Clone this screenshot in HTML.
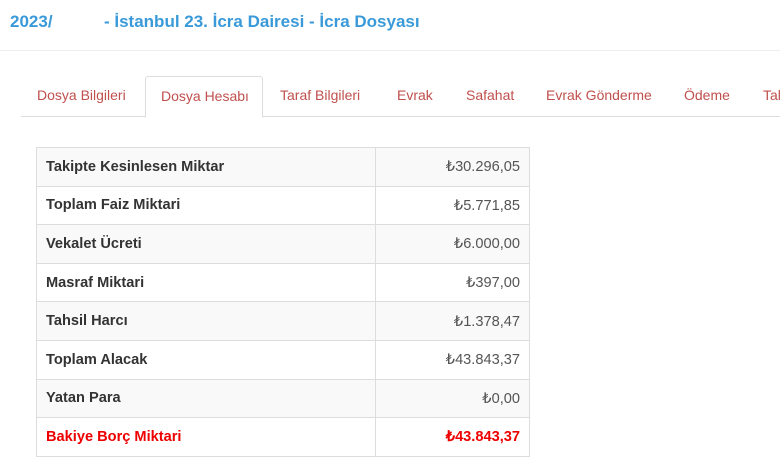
<!DOCTYPE html>
<html><head><meta charset="utf-8"><style>
body{margin:0;width:780px;height:472px;overflow:hidden;background:#fff;font-family:"Liberation Sans",Arial,sans-serif;}
.title{position:absolute;top:12px;font-size:17px;font-weight:bold;color:#3a9ad9;white-space:nowrap;}
.hr{position:absolute;left:0;top:50px;width:780px;height:1px;background:#eee;}
.tabs{position:absolute;left:21px;top:76px;width:800px;height:40px;border-bottom:1px solid #ddd;}
.tab{position:absolute;top:0;height:40px;line-height:39px;font-size:14px;color:#c0504d;white-space:nowrap;}
.tab.active{border:1px solid #ddd;border-bottom:1px solid #fff;border-radius:3px 3px 0 0;background:#fff;top:0;height:40px;}
table{position:absolute;left:36px;top:147px;border-collapse:collapse;width:494px;font-size:14.6px;}
td{border:1px solid #ddd;height:37.6px;padding:0 9px;}
td:first-child{font-weight:bold;color:#333;width:320px;}
td:last-child{text-align:right;color:#555;}
tr:nth-child(odd) td{background:#f9f9f9;}
tr.red td{color:#e00;font-weight:bold;}
</style></head><body>
<div class="title" style="left:10px">2023/</div>
<div class="title" style="left:104px">- İstanbul 23. İcra Dairesi - İcra Dosyası</div>
<div class="hr"></div>
<div class="tabs">
<div class="tab" style="left:16px">Dosya Bilgileri</div>
<div class="tab active" style="left:124px;width:116px;"><span style="position:absolute;left:15px">Dosya Hesabı</span></div>
<div class="tab" style="left:259px">Taraf Bilgileri</div>
<div class="tab" style="left:376px">Evrak</div>
<div class="tab" style="left:445px">Safahat</div>
<div class="tab" style="left:525px">Evrak Gönderme</div>
<div class="tab" style="left:663px">Ödeme</div>
<div class="tab" style="left:742px">Talep</div>
</div>
<table>
<tr><td>Takipte Kesinlesen Miktar</td><td>₺30.296,05</td></tr>
<tr><td>Toplam Faiz Miktari</td><td>₺5.771,85</td></tr>
<tr><td>Vekalet Ücreti</td><td>₺6.000,00</td></tr>
<tr><td>Masraf Miktari</td><td>₺397,00</td></tr>
<tr><td>Tahsil Harcı</td><td>₺1.378,47</td></tr>
<tr><td>Toplam Alacak</td><td>₺43.843,37</td></tr>
<tr><td>Yatan Para</td><td>₺0,00</td></tr>
<tr class="red"><td>Bakiye Borç Miktari</td><td>₺43.843,37</td></tr>
</table>
</body></html>
